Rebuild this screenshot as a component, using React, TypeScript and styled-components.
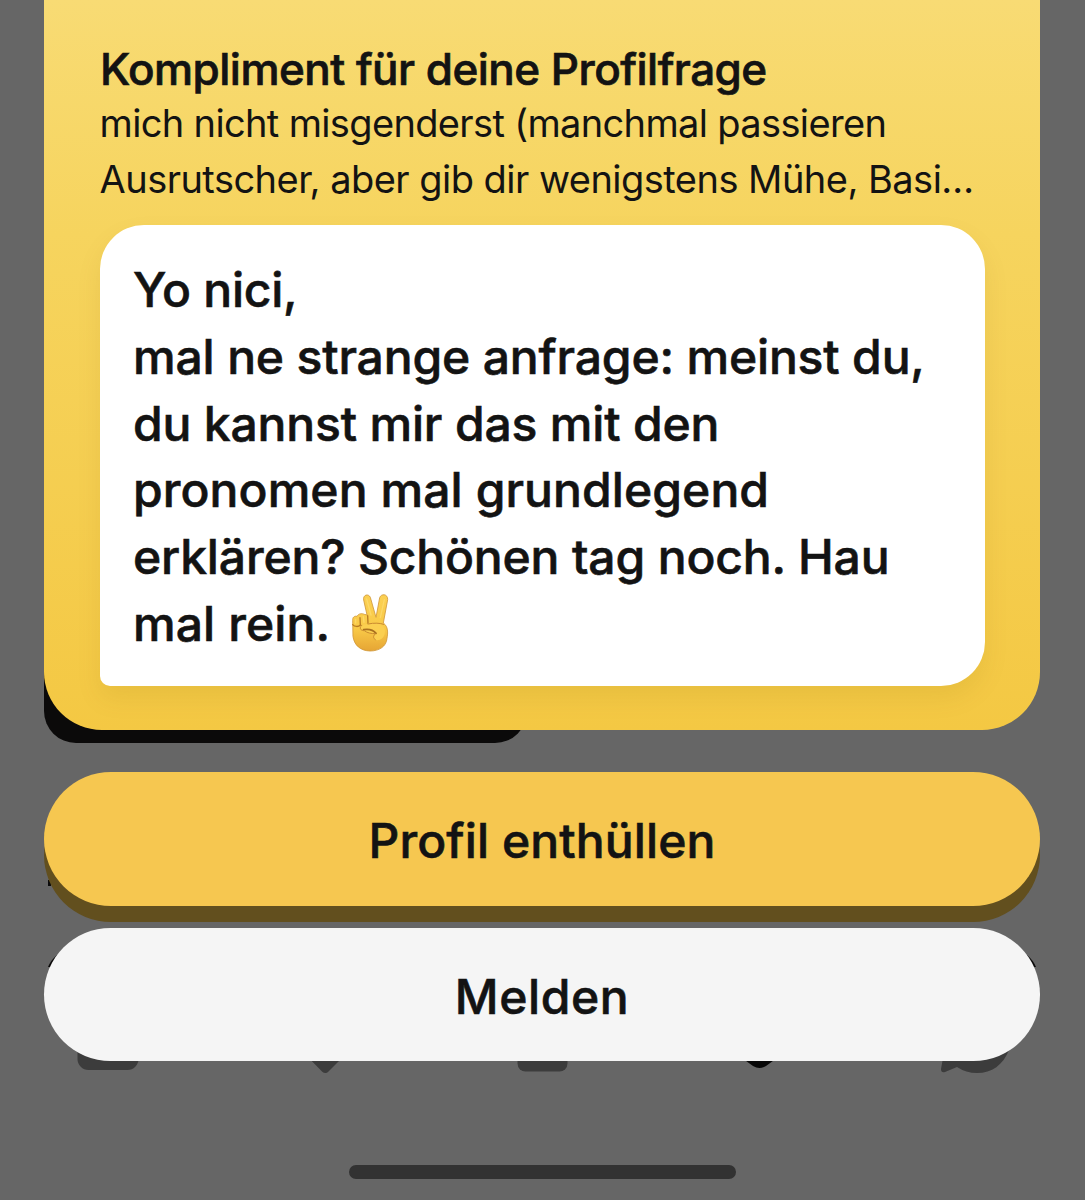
import React from "react";
import styled, { createGlobalStyle } from "styled-components";

const GlobalStyle = createGlobalStyle`
  *, *::before, *::after { box-sizing: border-box; }
  body {
    margin: 0;
    background: #666666;
    color: #131313;
    font-family: Inter, "Liberation Sans", sans-serif;
  }
`;

const Screen = styled.div`
  position: relative;
  width: 1085px;
  height: 1200px;
  overflow: hidden;
  background: #666666;
`;

/* The dimmed page that lies under the sheet */
const DimmedPage = styled.div`
  position: absolute;
  inset: 0;
  display: flex;
  flex-direction: column;
`;

const DimmedPhoto = styled.div`
  width: 483px;
  height: 143px;
  margin: 600px 0 0 44px;
  border-radius: 32px;
  background: #0b0a0a;
`;

const DimmedText = styled.svg`
  display: block;
  flex: none;
  width: 1085px;
  height: 287px;
`;

const TabBar = styled.nav`
  display: grid;
  grid-template-columns: repeat(5, 217px);
  justify-items: center;
`;

const TabIcon = styled.svg<{ $active?: boolean }>`
  display: block;
  width: 80px;
  height: 50px;
  fill: ${(p) => (p.$active ? "#080808" : "#3c3c3c")};
`;

const Sheet = styled.main`
  position: relative;
  display: flex;
  flex-direction: column;
  height: 100%;
  padding: 0 45px 0 44px;
`;

const Card = styled.section`
  height: 730px;
  padding: 43px 55.5px 0;
  border-radius: 0 0 58px 58px;
  background: linear-gradient(180deg, #f8db74 0%, #f6d45e 32%, #f4c843 100%);
`;

const CardTitle = styled.h1`
  margin: 0;
  padding-left: 0.5px;
  font-size: 44px;
  font-weight: 500;
  line-height: 53px;
  letter-spacing: -0.52px;
  white-space: nowrap;
  -webkit-text-stroke: 0.7px currentColor;
`;

const Question = styled.p`
  margin: -1px 0 18px;
  font-size: 38px;
  font-weight: 400;
  line-height: 56px;
`;

const Line = styled.span<{ $tracking: number }>`
  display: block;
  white-space: nowrap;
  letter-spacing: ${(p) => p.$tracking}px;
`;

const Bubble = styled.div`
  width: 885px;
  height: 460.5px;
  padding: 32px 0 0 33.5px;
  border-radius: 44px 44px 44px 10px;
  background: #ffffff;
  box-shadow: 0 12px 24px rgba(130, 95, 0, 0.1);
  font-size: 48px;
  font-weight: 500;
  line-height: 66.8px;
  -webkit-text-stroke: 0.6px currentColor;
`;

const EmojiLine = styled.div`
  display: flex;
  align-items: flex-start;
`;

const Hand = styled.svg`
  width: 42px;
  height: 62px;
  margin: 1.5px 0 0 20px;
`;

const PillButton = styled.button<{ $primary?: boolean }>`
  display: flex;
  flex: none;
  align-items: center;
  justify-content: center;
  height: ${(p) => (p.$primary ? 134 : 133)}px;
  margin: ${(p) => (p.$primary ? "42px 0 22px" : "0")};
  padding: ${(p) => (p.$primary ? 2 : 3)}px 0 0;
  border: 0;
  border-radius: 67px;
  background: ${(p) => (p.$primary ? "#f6c750" : "#f5f5f5")};
  box-shadow: ${(p) => (p.$primary ? "0 16px 0 #624f1e" : "none")};
  color: #131313;
  font-family: inherit;
  font-size: 48px;
  font-weight: 500;
  letter-spacing: ${(p) => (p.$primary ? 0.1 : 0.6)}px;
  -webkit-text-stroke: 0.6px currentColor;
`;

const HomeIndicator = styled.div`
  align-self: center;
  width: 387px;
  height: 14px;
  margin-top: 103.5px;
  border-radius: 7px;
  background: #323232;
`;

const question = [
  { text: "mich nicht misgenderst (manchmal passieren", tracking: -0.65 },
  { text: "Ausrutscher, aber gib dir wenigstens Mühe, Basi…", tracking: -0.53 },
];

const message = [
  { text: "Yo nici,", tracking: -0.25 },
  { text: "mal ne strange anfrage: meinst du,", tracking: -0.16 },
  { text: "du kannst mir das mit den", tracking: -0.17 },
  { text: "pronomen mal grundlegend", tracking: 0.09 },
  { text: "erklären? Schönen tag noch. Hau", tracking: -0.16 },
];

function VictoryHand() {
  return (
    <Hand viewBox="90 35 126 186" role="img" aria-label="Victory-Hand">
      <defs>
        <linearGradient id="skin" x1="0" y1="0" x2="0" y2="1">
          <stop offset="0" stopColor="#fbd052" />
          <stop offset="0.6" stopColor="#f9ca48" />
          <stop offset="1" stopColor="#e6a534" />
        </linearGradient>
      </defs>
      <g stroke="#d0973a" strokeWidth="2.5" strokeLinejoin="round" strokeLinecap="round">
        <path
          fill="url(#skin)"
          d="M98 120 C97 111 103 106 111 108 C115 100 125 98 133 102 L141 104 L131 59 C128 44 145 38 151 51 L168 111 L179 52 C183 39 204 40 203 58 L190 128 C205 139 204 157 201 174 C199 199 177 212 150 212 C122 211 103 196 99 169 Z"
        />
        <path fill="none" stroke="#b87a22" strokeWidth="4" d="M98 133 C104 140 116 140 121 134 C128 138 138 137 144 130 M121 133 L120 112 M144 130 L143 106" />
        <path fill="#fbcf50" stroke="none" d="M121 139 C127 131 148 127 169 129 C190 132 200 147 193 164 C188 178 175 183 163 177 C157 173 163 166 167 162 C151 162 135 153 124 150 Z" />
        <path fill="none" stroke="#a8701f" strokeWidth="5.5" d="M131 148 C144 146 160 149 168 159" />
        <path fill="none" stroke="#c98a30" strokeWidth="3" d="M122 139 C118 146 124 151 133 151 C142 158 154 160 166 160 C158 168 160 175 166 178 M144 131 C163 127 180 128 191 132" />
      </g>
      <path fill="none" stroke="#ffe07a" strokeWidth="4" strokeLinecap="round" d="M140 56 L153 104 M193 58 L181 112 M107 117 L107 128 M130 109 L132 126" opacity="0.6" />
    </Hand>
  );
}

export default function App() {
  return (
    <>
      <GlobalStyle />
      <Screen>
        <DimmedPage aria-hidden="true">
          <DimmedPhoto />
          <DimmedText viewBox="0 743 1085 287">
            <path d="M48 880h3v6h-3z" fill="#0b0a0a" />
            <path d="M48 967Q51 960 57 955V967Z" fill="#0b0a0a" />
            <path d="M1036 967Q1033 960 1027 955V967Z" fill="#0b0a0a" />
          </DimmedText>
          <TabBar>
            <TabIcon viewBox="0 0 80 50">
              <rect x="8.5" y="0" width="61" height="40" rx="11" />
            </TabIcon>
            <TabIcon viewBox="0 0 80 50">
              <path d="M10 15H69L42.5 41.5Q39.5 44.5 36 41.5Z" />
            </TabIcon>
            <TabIcon viewBox="0 0 80 50">
              <rect x="14.5" y="0" width="50" height="41.5" rx="8" />
            </TabIcon>
            <TabIcon viewBox="0 0 80 50" $active>
              <path d="M4 15H75L46 36Q39.5 40 33 36Z" />
            </TabIcon>
            <TabIcon viewBox="0 0 80 50">
              <path d="M6 28 4 39Q4 43 8 42L20 37Q29 43 40 43C55 43 66 35 72 20L60 10H6Z" />
            </TabIcon>
          </TabBar>
        </DimmedPage>

        <Sheet>
          <Card>
            <CardTitle>Kompliment für deine Profilfrage</CardTitle>
            <Question>
              {question.map((l) => (
                <Line key={l.text} $tracking={l.tracking}>{l.text}</Line>
              ))}
            </Question>
            <Bubble>
              {message.map((l) => (
                <Line key={l.text} $tracking={l.tracking}>{l.text}</Line>
              ))}
              <EmojiLine>
                <Line $tracking={0.1}>mal rein.</Line>
                <VictoryHand />
              </EmojiLine>
            </Bubble>
          </Card>
          <PillButton $primary>Profil enthüllen</PillButton>
          <PillButton>Melden</PillButton>
          <HomeIndicator />
        </Sheet>
      </Screen>
    </>
  );
}
